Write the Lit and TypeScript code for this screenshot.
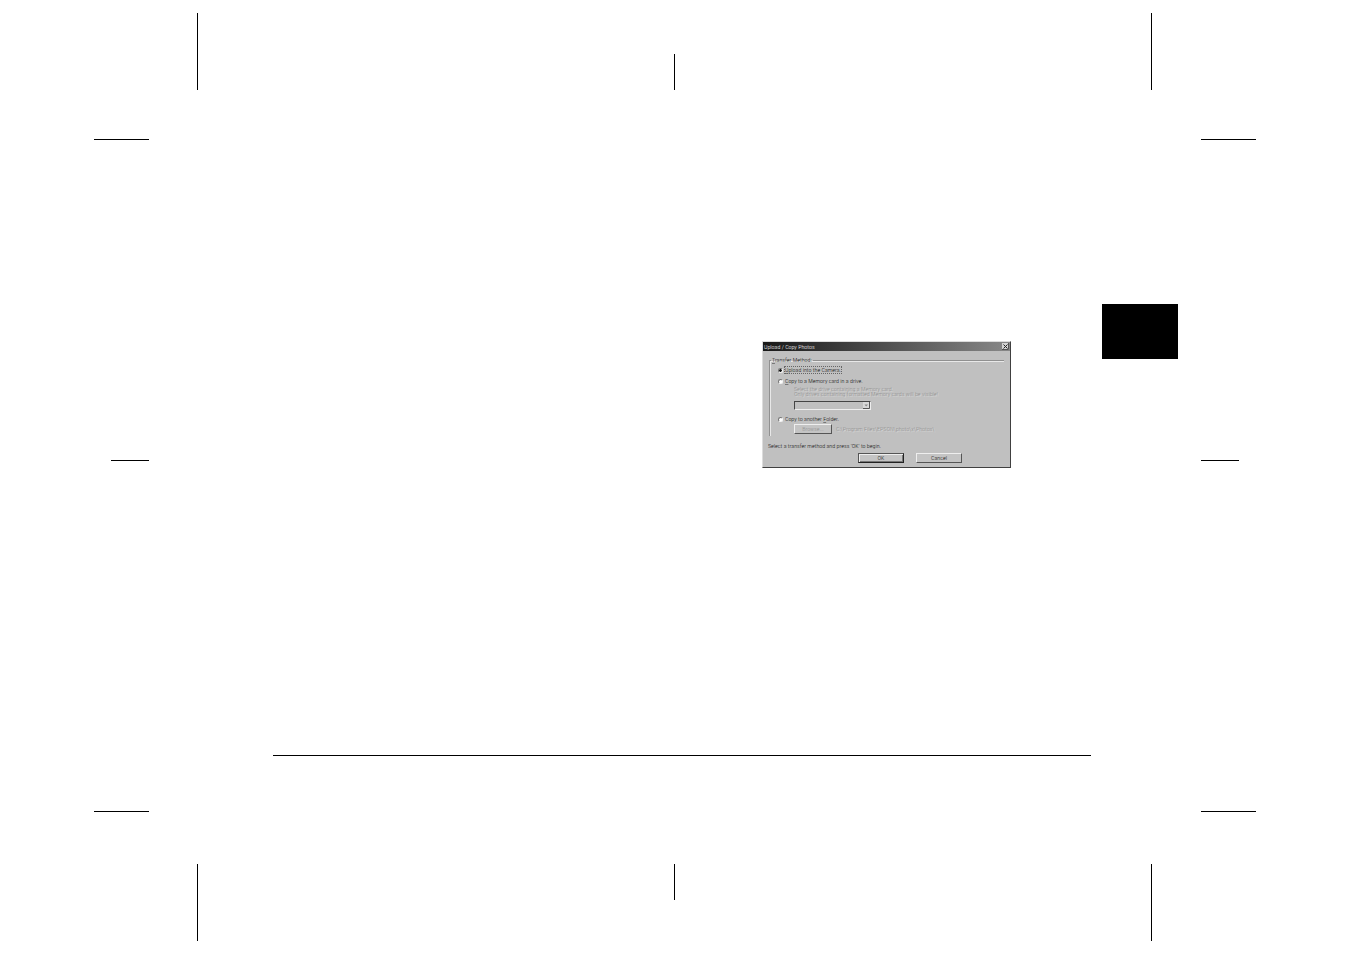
import { LitElement, html, css } from "lit";
import { customElement, state } from "lit/decorators.js";

type Method = "camera" | "card" | "folder";

@customElement("transfer-dialog")
class TransferDialog extends LitElement {
  @state() private method: Method = "camera";

  static styles = css`
    :host {
      display: block;
      box-sizing: border-box;
      background: #c0c0c0;
      border: 1px solid;
      border-color: #dcdcdc #404040 #404040 #dcdcdc;
      color: #111;
      font-family: "Roboto Condensed", "Liberation Sans", sans-serif;
      font-size: 6px;
      font-weight: 300;
      line-height: 8px;
      white-space: nowrap;
    }
    header {
      display: flex;
      align-items: center;
      justify-content: space-between;
      height: 9px;
      padding: 0 1px;
      background: linear-gradient(90deg, #181818, #888);
      color: #fff;
    }
    h1, p { margin: 0; font: inherit; }
    u { text-underline-offset: 1px; text-decoration-thickness: 1px; text-decoration-color: #777; text-decoration-skip-ink: none; }
    button, select, input { box-sizing: border-box; margin: 0; padding: 0; border-radius: 0; }
    button, select { font: inherit; color: inherit; }
    button {
      background: #c4c4c4;
      border: 1px solid;
      border-color: #eee #555 #555 #eee;
    }
    .close { width: 7px; height: 7px; border: 0; background: #d4d4d4; }
    .close svg { display: block; }
    fieldset {
      min-width: 0;
      margin: 5px 6px 0;
      padding: 2px 0 2px 8px;
      border: solid #909090;
      border-width: 1px 0 0 1px;
      box-shadow: inset 1px 1px 0 #e8e8e8;
    }
    legend { margin-left: -7px; padding: 0 1px; }
    .choice { display: flex; align-items: center; gap: 1px; height: 8px; }
    .choice label { padding: 0 1px; }
    .choice + .choice { margin-top: 3px; }
    input:checked + label { outline: 1px dotted #666; outline-offset: -1px; }
    input {
      appearance: none;
      width: 5px;
      height: 5px;
      border: 1px solid;
      border-color: #777 #f4f4f4 #f4f4f4 #777;
      border-radius: 50%;
      background: #fff;
    }
    input:checked { background: radial-gradient(circle, #111 1px, #fff 2px); }
    .detail { padding-left: 16px; }
    .faint { color: #909090; text-shadow: 1px 1px 0 #d8d8d8; }
    .notes { padding-top: 1px; line-height: 5px; }
    .drive { display: flex; width: 77px; margin: 5px 0; position: relative; }
    select {
      appearance: none;
      width: 100%;
      height: 9px;
      background: #c0c0c0;
      border: 1px solid;
      border-color: #444 #eee #eee #444;
      opacity: 1;
    }
    .arrow { position: absolute; right: 1px; top: 1px; pointer-events: none; }
    .browse { display: flex; align-items: center; gap: 4px; padding-top: 1px; }
    .browse button { width: 38px; height: 10px; }
    .prompt { padding: 6px 5px 0; }
    footer { display: flex; justify-content: center; gap: 12px; padding: 3px 0 4px 47px; }
    footer button { width: 46px; height: 10px; }
    .default { border-color: #555 #222 #222 #555; box-shadow: inset 1px 1px 0 #eee, inset -1px -1px 0 #777; }
  `;

  private radio(value: Method, label: unknown) {
    return html`<div class="choice">
      <input type="radio" name="method" id=${value} .checked=${this.method === value}
        @change=${() => (this.method = value)} />
      <label for=${value}>${label}</label>
    </div>`;
  }

  render() {
    return html`
      <header>
        <h1>Upload / Copy Photos</h1>
        <button class="close" aria-label="Close">
          <svg width="7" height="7" viewBox="0 0 7 7">
            <path d="M1.5 1.5l4 4M5.5 1.5l-4 4" stroke="#222" />
            <path d="M0 6.5h6.5V0" fill="none" stroke="#555" />
          </svg>
        </button>
      </header>
      <fieldset>
        <legend><u>T</u>ransfer Method:</legend>
        ${this.radio("camera", html`<u>U</u>pload into the Camera.`)}
        ${this.radio("card", html`<u>C</u>opy to a Memory card in a drive.`)}
        <div class="detail faint notes">
          <p>Select the drive containing a Memory card.</p>
          <p>Only drives containing formatted Memory cards will be visible!</p>
        </div>
        <div class="detail">
          <div class="drive">
            <select aria-label="Drive" ?disabled=${this.method !== "card"}></select>
            <svg class="arrow" width="7" height="7" viewBox="0 0 7 7">
              <path d="M0 0h7v7H0z" fill="#d8d8d8" />
              <path d="M0 6.5h6.5V0" fill="none" stroke="#555" />
              <path d="M1.500 2.500h3.500L3.200 4.500z" fill="#888" />
            </svg>
          </div>
        </div>
        ${this.radio("folder", html`Copy to another <u>F</u>older.`)}
        <div class="detail browse faint">
          <button ?disabled=${this.method !== "folder"}>Browse...</button>
          <span>C:\\Program Files\\EPSON\\photo\\x\\Photos\\</span>
        </div>
      </fieldset>
      <p class="prompt">Select a transfer method and press 'OK' to begin.</p>
      <footer>
        <button class="default">OK</button>
        <button>Cancel</button>
      </footer>
    `;
  }
}

@customElement("app-root")
class AppRoot extends LitElement {
  static styles = css`
    :host {
      display: flex;
      flex-direction: column;
      box-sizing: border-box;
      min-height: 100vh;
      padding: 13px 0;
      background: #fff;
      font-family: "Liberation Sans", sans-serif;
    }
    .marks { display: flex; justify-content: space-between; padding: 0 199px 0 197px; }
    .top { align-items: flex-end; }
    .v { width: 1px; height: 77px; background: #000; }
    .v.short { height: 36px; }
    .h { width: 55px; height: 1px; background: #000; }
    .h.short { width: 38px; }
    .middle { display: flex; flex: 1; padding: 49px 95px 52px 94px; }
    .side { display: flex; flex-direction: column; width: 55px; }
    .side.left { align-items: flex-end; }
    .upper { flex: 32; }
    .lower { flex: 35; }
    main { display: flex; flex: 1; flex-direction: column; justify-content: space-between; padding: 165px 0 56px; }
    .content { display: flex; justify-content: flex-end; align-items: flex-start; gap: 91px; padding-right: 23px; }
    transfer-dialog { width: 249px; margin-top: 37px; }
    .tab { width: 76px; height: 55px; background: #000; }
    hr { align-self: stretch; height: 1px; margin: 0 110px 0 124px; border: 0; background: #000; }
  `;

  private side(name: string) {
    return html`<div class="side ${name}">
      <div class="h"></div>
      <div class="upper"></div>
      <div class="h short"></div>
      <div class="lower"></div>
      <div class="h"></div>
    </div>`;
  }

  private marks(name: string) {
    return html`<div class="marks ${name}">
      <div class="v"></div>
      <div class="v short"></div>
      <div class="v"></div>
    </div>`;
  }

  render() {
    return html`
      ${this.marks("top")}
      <div class="middle">
        ${this.side("left")}
        <main>
          <div class="content">
            <transfer-dialog role="dialog" aria-label="Upload / Copy Photos"></transfer-dialog>
            <div class="tab"></div>
          </div>
          <hr />
        </main>
        ${this.side("right")}
      </div>
      ${this.marks("bottom")}
    `;
  }
}
